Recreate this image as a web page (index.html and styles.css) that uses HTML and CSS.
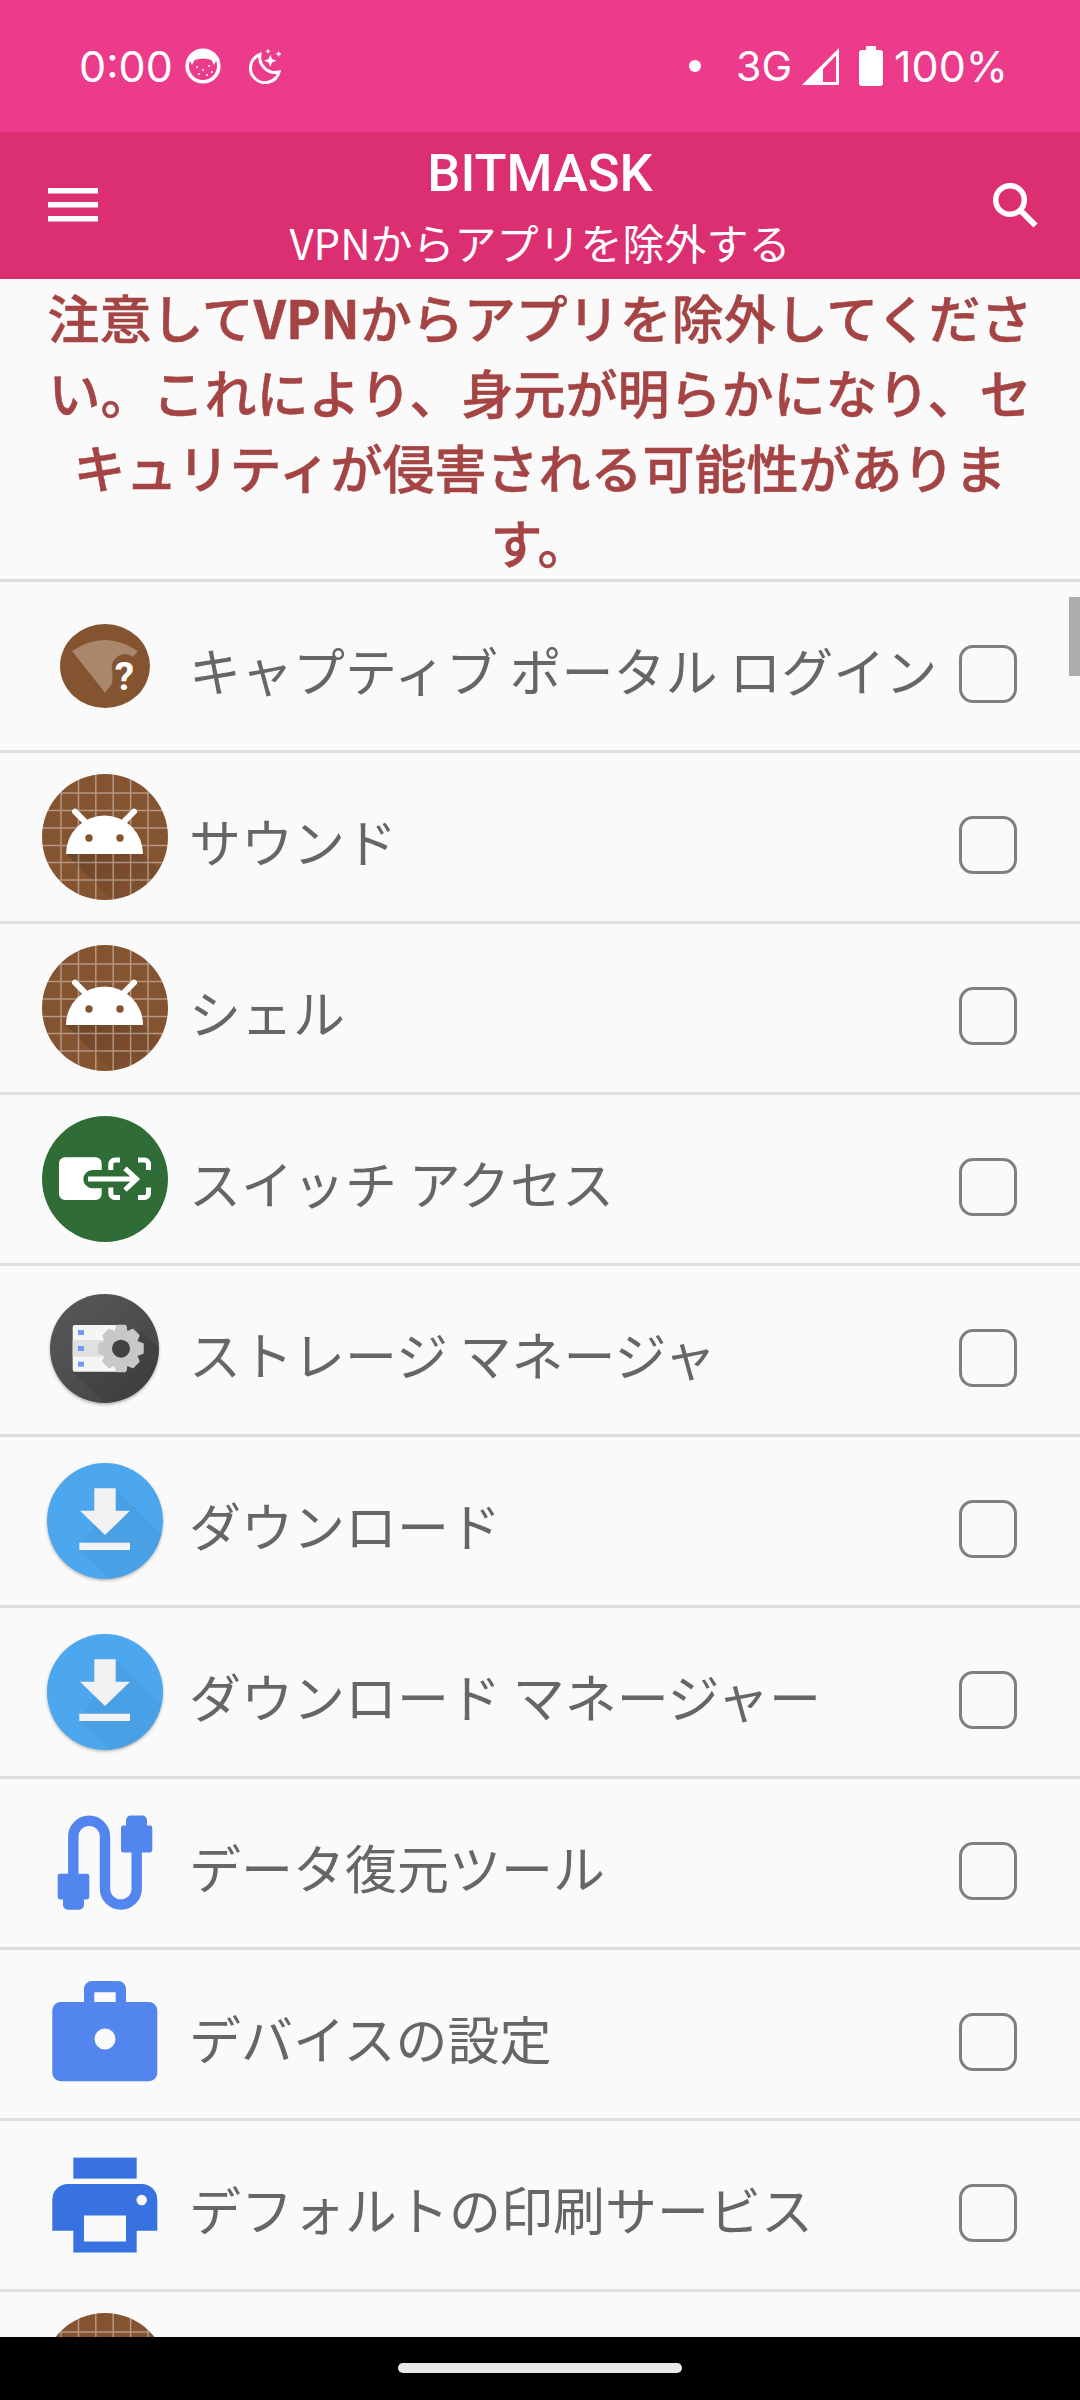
FILE: index.html
```html
<!DOCTYPE html>
<html lang="ja">
<head>
    <meta charset="UTF-8">
    <title>BITMASK</title>
    <link rel="stylesheet" href="styles.css">
</head>
<body>
    <!-- Icon sheet -->
    <svg class="icon-sheet" width="0" height="0">
        <defs>
            <clipPath id="clip-full"><circle cx="63" cy="63" r="63"/></clipPath>
            <clipPath id="clip-portal"><ellipse cx="63" cy="63" rx="45" ry="42"/></clipPath>
            <clipPath id="clip-storage"><circle cx="62.5" cy="61.5" r="54.5"/></clipPath>
            <clipPath id="clip-download"><circle cx="63" cy="63" r="58"/></clipPath>
            <linearGradient id="fade-shadow" x1="0" y1="0" x2="1" y2="1">
                <stop offset="0" stop-color="#000" stop-opacity="0.17"/>
                <stop offset="1" stop-color="#000" stop-opacity="0"/>
            </linearGradient>
            <linearGradient id="storage-fill" x1="0" y1="0" x2="1" y2="1">
                <stop offset="0" stop-color="#585858"/>
                <stop offset="1" stop-color="#434343"/>
            </linearGradient>
            <filter id="soft" x="-20%" y="-20%" width="140%" height="140%">
                <feGaussianBlur stdDeviation="1.6"/>
            </filter>
        </defs>

        <symbol id="ic-android" viewBox="0 0 126 126">
            <circle cx="63" cy="63" r="63" fill="#845330"/>
            <g clip-path="url(#clip-full)">
                <path d="M24 80 L70 126 L126 126 L126 104 L101 80 Z" fill="url(#fade-shadow)"/>
                <path d="M19 0V126M36.5 0V126M53.8 0V126M71.2 0V126M88.6 0V126M106 0V126M0 19H126M0 36.6H126M0 54H126M0 71.5H126M0 88.6H126M0 106H126" stroke="#fff" stroke-opacity="0.4" stroke-width="1.5" fill="none"/>
            </g>
            <path d="M33 37.7 L43 47.7 M92 37.7 L82 47.7" stroke="#fff" stroke-width="6" stroke-linecap="round"/>
            <path d="M24 80 A38.5 38.5 0 0 1 101 80 Z" fill="#fff"/>
            <circle cx="47" cy="64" r="3.7" fill="#845330"/>
            <circle cx="78" cy="64" r="3.7" fill="#845330"/>
        </symbol>

        <symbol id="ic-switch" viewBox="0 0 126 126">
            <circle cx="63" cy="63" r="63" fill="#306c36"/>
            <path d="M23 41.3 H53.7 A6 6 0 0 1 59.7 47.3 V54 H50.5 A9.1 9.1 0 0 0 50.5 72.3 H59.7 V78 A6 6 0 0 1 53.7 84 H23 A6 6 0 0 1 17 78 V47.3 A6 6 0 0 1 23 41.3 Z" fill="#fff"/>
            <path d="M46 63 H94 M83 52.3 L94.5 63 L83 74" stroke="#fff" stroke-width="5" fill="none"/>
            <path d="M68.8 54 V48 A4 4 0 0 1 72.8 44 H78 M96 44 H102.5 A4 4 0 0 1 106.5 48 V54 M106.5 71.5 V77.5 A4 4 0 0 1 102.5 81.5 H96 M78 81.5 H72.8 A4 4 0 0 1 68.8 77.5 V71.5" stroke="#fff" stroke-width="5" fill="none"/>
        </symbol>

        <symbol id="ic-storage" viewBox="0 0 126 126">
            <circle cx="62.5" cy="63.2" r="54.5" fill="#000" fill-opacity="0.3" filter="url(#soft)"/>
            <circle cx="62.5" cy="61.5" r="54.5" fill="url(#storage-fill)"/>
            <path d="M30.7 84.7 L62 116 L117 116 L117 62 L100 44 Z" fill="#000" fill-opacity="0.09" clip-path="url(#clip-storage)"/>
            <rect x="30.7" y="38" width="54" height="46.7" rx="2" fill="#f5f5f5"/>
            <rect x="30.7" y="53" width="54" height="16.7" fill="#e0e0e0"/>
            <rect x="36" y="43" width="6" height="5" fill="#6f9cf5"/>
            <rect x="36" y="59" width="6" height="5" fill="#6f9cf5"/>
            <rect x="36" y="74.7" width="6" height="5" fill="#6f9cf5"/>
            <path d="M75 38.5 H83 L85 45 L91 42.5 L97 48.5 L94.5 54.5 L101 57 V66 L94.5 68.5 L97 74.5 L91 80.5 L85 78 L83 84.5 H75 L73 78 L67 80.5 L61 74.5 L63.5 68.5 L57 66 V57 L63.5 54.5 L61 48.5 L67 42.5 L73 45 Z" fill="#c8c8c8" stroke="#c8c8c8" stroke-width="1.5" stroke-linejoin="round"/>
            <circle cx="79" cy="61.7" r="9" fill="#424242"/>
        </symbol>

        <symbol id="ic-download" viewBox="0 0 126 126">
            <circle cx="63" cy="64.5" r="58" fill="#000" fill-opacity="0.28" filter="url(#soft)"/>
            <circle cx="63" cy="63" r="58" fill="#4da7ee"/>
            <path d="M73.7 30.3 L122 78 L122 126 L72 126 L37.3 92 Z" fill="#000" fill-opacity="0.04" clip-path="url(#clip-download)"/>
            <path d="M52.3 30.3 H73.7 V52.7 H88 L63 77 L38 52.7 H52.3 Z" fill="#f2f2f2"/>
            <rect x="37.3" y="84.7" width="50.7" height="7.3" fill="#f2f2f2"/>
        </symbol>

        <symbol id="ic-cable" viewBox="0 0 126 126">
            <path d="M31.3 76 V36.6 A15.8 15.8 0 0 1 63 36.6 V88.7 A15.8 15.8 0 0 0 94.7 88.7 V50" stroke="#5285ee" stroke-width="10.4" fill="none"/>
            <path d="M18 73.7 H21 V73.7 H45 A2.3 2.3 0 0 1 47.3 76 V97 A2.3 2.3 0 0 1 45 99.4 H42 V105 A4.7 4.7 0 0 1 37.3 109.7 H25.7 A4.7 4.7 0 0 1 21 105 V99.4 H18 A2.3 2.3 0 0 1 15.7 97 V76 A2.3 2.3 0 0 1 18 73.7 Z" fill="#5285ee"/>
            <path d="M88.7 15.6 H100.3 A4.7 4.7 0 0 1 105 20.3 V25.5 H108 A2.3 2.3 0 0 1 110.3 27.8 V50 A2.3 2.3 0 0 1 108 52.4 H81.3 A2.3 2.3 0 0 1 79 50 V27.8 A2.3 2.3 0 0 1 81.3 25.5 H84 V20.3 A4.7 4.7 0 0 1 88.7 15.6 Z" fill="#5285ee"/>
        </symbol>

        <symbol id="ic-case" viewBox="0 0 126 126">
            <path fill-rule="evenodd" d="M50 9.9 H76 A8 8 0 0 1 84 17.9 V31 H107 A8.3 8.3 0 0 1 115.3 39.3 V102 A8.3 8.3 0 0 1 107 110.3 H18.6 A8.3 8.3 0 0 1 10.3 102 V39.3 A8.3 8.3 0 0 1 18.6 31 H42 V17.9 A8 8 0 0 1 50 9.9 Z M52.3 21.3 V31 H73.7 V21.3 Z M63 57.5 A10.5 10.5 0 1 0 63 78.5 A10.5 10.5 0 1 0 63 57.5 Z" fill="#5285ee"/>
        </symbol>

        <symbol id="ic-printer" viewBox="0 0 126 126">
            <rect x="31.3" y="15.6" width="63.4" height="21" fill="#3872e0"/>
            <path fill-rule="evenodd" d="M26 42 H99.6 A15.7 15.7 0 0 1 115.3 57.7 V88.8 H94.7 V110.5 H31.3 V88.8 H10.3 V57.7 A15.7 15.7 0 0 1 26 42 Z M42 73.4 V99.4 H84 V73.4 Z M99.7 52.8 A5.2 5.2 0 1 0 99.7 63.2 A5.2 5.2 0 1 0 99.7 52.8 Z" fill="#3872e0"/>
        </symbol>
    </svg>

    <!-- Status bar -->
    <div class="status-bar">
        <div class="status-left">
            <span class="status-time">0:00</span>
            <svg class="status-cat" viewBox="0 0 36 36">
                <circle cx="18" cy="18" r="15.8" fill="none" stroke="#fff" stroke-width="3.6"/>
                <path d="M5 13 Q4 6 12 3 H24 Q32 6 31 13 L29 17 L26.5 12 Q18 9 9.5 12 L7 17 Z" fill="#fff"/>
                <circle cx="12" cy="19" r="1" fill="#fff"/>
                <circle cx="18" cy="22" r="1" fill="#fff"/>
                <circle cx="24" cy="18" r="1" fill="#fff"/>
                <circle cx="14" cy="26" r="1" fill="#fff"/>
                <circle cx="22" cy="27" r="1" fill="#fff"/>
                <circle cx="27" cy="24" r="1" fill="#fff"/>
            </svg>
            <svg class="status-moon" viewBox="0 0 36 36">
                <path d="M13 6.5 A14.5 14.5 0 1 0 32 24 A15.5 15.5 0 0 1 13 6.5 Z" fill="none" stroke="#fff" stroke-width="3"/>
                <path d="M23.3 6.5 L25 11 L29.5 12.7 L25 14.4 L23.3 19 L21.6 14.4 L17 12.7 L21.6 11 Z M21 0.5 L21.8 2.5 L23.8 3.3 L21.8 4.1 L21 6 L20.2 4.1 L18.2 3.3 L20.2 2.5 Z M31.7 3 L32.6 5.1 L34.7 6 L32.6 6.9 L31.7 9 L30.8 6.9 L28.7 6 L30.8 5.1 Z" fill="#fff"/>
            </svg>
        </div>
        <div class="status-right">
            <span class="status-dot"></span>
            <span class="status-net">3G</span>
            <svg class="status-signal" viewBox="0 0 37 37">
                <path fill-rule="evenodd" d="M37 0 V37 H0 Z M34 7.5 L21 21 V34 H34 Z" fill="#fff"/>
            </svg>
            <svg class="status-battery" viewBox="0 0 24 40">
                <path d="M7 0 H17 V4 H21 A3 3 0 0 1 24 7 V37 A3 3 0 0 1 21 40 H3 A3 3 0 0 1 0 37 V7 A3 3 0 0 1 3 4 H7 Z" fill="#fff"/>
            </svg>
            <span class="status-level">100%</span>
        </div>
    </div>

    <!-- Toolbar -->
    <header class="toolbar">
        <div class="toolbar-menu">
            <svg class="menu-icon" viewBox="0 0 50 34">
                <path d="M0 0H50V5.5H0ZM0 14H50V19.5H0ZM0 28H50V33.5H0Z" fill="#fff"/>
            </svg>
        </div>
        <div class="toolbar-titles">
            <div class="toolbar-title">BITMASK</div>
            <div class="toolbar-subtitle">VPNからアプリを除外する</div>
        </div>
        <div class="toolbar-search">
            <svg class="search-icon" viewBox="0 0 46 46">
                <circle cx="17" cy="17" r="14.3" fill="none" stroke="#fff" stroke-width="5.5"/>
                <path d="M27 27 L42.5 42.5" stroke="#fff" stroke-width="6" fill="none"/>
            </svg>
        </div>
    </header>

    <p class="warning">注意して<b class="warning-latin">VPN</b>からアプリを除外してください。これにより、身元が明らかになり、セキュリティが侵害される可能性があります。</p>

    <main class="app-list">
        <div class="app-row">
            <svg class="app-icon" viewBox="0 0 126 126">
                <ellipse cx="63" cy="63" rx="45" ry="42" fill="#845330"/>
                <path d="M30 48 Q63 26 95.7 48 L63 89.7 Z" fill="#a9876d"/>
                <g fill="#845330" clip-path="url(#clip-portal)">
                    <circle cx="83" cy="64.6" r="13.3"/>
                    <path d="M70.5 69 L77 72 L100 70 L100 92 L70 92 Z"/>
                </g>
                <text x="82.5" y="87" class="portal-mark">?</text>
            </svg>
            <span class="app-name">キャプティブ ポータル ログイン</span>
            <span class="app-check"></span>
        </div>
        <div class="app-row">
            <svg class="app-icon"><use href="#ic-android"/></svg>
            <span class="app-name">サウンド</span>
            <span class="app-check"></span>
        </div>
        <div class="app-row">
            <svg class="app-icon"><use href="#ic-android"/></svg>
            <span class="app-name">シェル</span>
            <span class="app-check"></span>
        </div>
        <div class="app-row">
            <svg class="app-icon"><use href="#ic-switch"/></svg>
            <span class="app-name">スイッチ アクセス</span>
            <span class="app-check"></span>
        </div>
        <div class="app-row">
            <svg class="app-icon"><use href="#ic-storage"/></svg>
            <span class="app-name">ストレージ マネージャ</span>
            <span class="app-check"></span>
        </div>
        <div class="app-row">
            <svg class="app-icon"><use href="#ic-download"/></svg>
            <span class="app-name">ダウンロード</span>
            <span class="app-check"></span>
        </div>
        <div class="app-row">
            <svg class="app-icon"><use href="#ic-download"/></svg>
            <span class="app-name">ダウンロード マネージャー</span>
            <span class="app-check"></span>
        </div>
        <div class="app-row">
            <svg class="app-icon"><use href="#ic-cable"/></svg>
            <span class="app-name">データ復元ツール</span>
            <span class="app-check"></span>
        </div>
        <div class="app-row">
            <svg class="app-icon"><use href="#ic-case"/></svg>
            <span class="app-name">デバイスの設定</span>
            <span class="app-check"></span>
        </div>
        <div class="app-row">
            <svg class="app-icon"><use href="#ic-printer"/></svg>
            <span class="app-name">デフォルトの印刷サービス</span>
            <span class="app-check"></span>
        </div>
        <div class="app-row">
            <svg class="app-icon"><use href="#ic-android"/></svg>
            <span class="app-name"></span>
            <span class="app-check"></span>
        </div>
        <div class="scroll-thumb"></div>
    </main>

    <!-- Navigation bar -->
    <footer class="nav-bar">
        <span class="nav-pill"></span>
    </footer>
</body>
</html>
```

FILE: styles.css
```css
body {
    margin: 0;
    width: 1080px;
    height: 2400px;
    overflow: hidden;
    display: flex;
    flex-direction: column;
    background: #fafafa;
    font-family: "Noto Sans CJK JP", "Noto Sans", sans-serif;
}

.icon-sheet {
    position: absolute;
}

.portal-mark {
    font-family: Roboto, sans-serif;
    font-size: 39px;
    font-weight: 700;
    fill: #fff;
    text-anchor: middle;
}

/* Status bar */
.status-bar {
    height: 132px;
    flex: none;
    background: #ec3b8b;
    color: #fff;
    display: flex;
    justify-content: space-between;
    align-items: center;
    padding: 0 72px 0 79px;
    font-family: Inter, sans-serif;
    font-size: 43px;
}

.status-left, .status-right {
    display: flex;
    align-items: center;
}

.status-cat {
    width: 36px;
    height: 36px;
    margin-left: 12px;
}

.status-moon {
    width: 36px;
    height: 36px;
    margin-left: 26px;
}

.status-dot {
    width: 12px;
    height: 12px;
    border-radius: 50%;
    background: #fff;
    margin-right: 35px;
}

.status-net {
    font-size: 41px;
}

.status-signal {
    width: 37px;
    height: 37px;
    margin-left: 10px;
}

.status-battery {
    width: 24px;
    height: 40px;
    margin-left: 20px;
}

.status-level {
    margin-left: 11px;
}

/* Toolbar */
.toolbar {
    height: 147px;
    flex: none;
    background: #dc2f72;
    color: #fff;
    display: grid;
    grid-template-columns: 120px 1fr 120px;
    align-items: center;
}

.toolbar-menu {
    padding-left: 48px;
    display: flex;
}

.menu-icon {
    width: 50px;
    height: 34px;
    margin-top: -1px;
}

.toolbar-search {
    display: flex;
    justify-content: flex-end;
    padding-right: 41px;
}

.search-icon {
    width: 46px;
    height: 46px;
}

.toolbar-titles {
    text-align: center;
}

.toolbar-title {
    font-family: Roboto, sans-serif;
    font-size: 52.5px;
    line-height: 68px;
    font-weight: 500;
}

.toolbar-subtitle {
    font-size: 42px;
    line-height: 62px;
    margin-top: 4px;
}

/* Warning */
.warning {
    flex: none;
    margin: 0;
    height: 300px;
    padding: 0 44px;
    font-size: 52px;
    line-height: 75px;
    font-weight: 500;
    -webkit-text-stroke: 0.5px #a44444;
    color: #a44444;
    text-align: center;
}

.warning-latin {
    font-weight: 700;
}

/* App list */
.app-list {
    flex: 1;
    min-height: 0;
    position: relative;
    overflow: hidden;
}

.app-row {
    height: 168px;
    border-top: 3px solid #dedede;
    display: flex;
    align-items: center;
    padding-left: 42px;
}

.app-icon {
    width: 126px;
    height: 126px;
    flex: none;
}

.app-name {
    flex: 1;
    margin: 6px 0 0 21px;
    font-size: 52px;
    color: #666;
    white-space: nowrap;
}

.app-check {
    width: 58px;
    height: 58px;
    box-sizing: border-box;
    flex: none;
    margin: 16px 63px 0 0;
    border: 3px solid #7f7f7f;
    border-radius: 14px;
}

.scroll-thumb {
    position: absolute;
    top: 18px;
    right: 0;
    width: 11px;
    height: 79px;
    background: #adadad;
}

/* Navigation bar */
.nav-bar {
    height: 63px;
    flex: none;
    background: #000;
    display: flex;
    justify-content: center;
    align-items: flex-start;
}

.nav-pill {
    width: 284px;
    height: 10px;
    margin-top: 26px;
    border-radius: 5px;
    background: #e9e9e9;
}
```
